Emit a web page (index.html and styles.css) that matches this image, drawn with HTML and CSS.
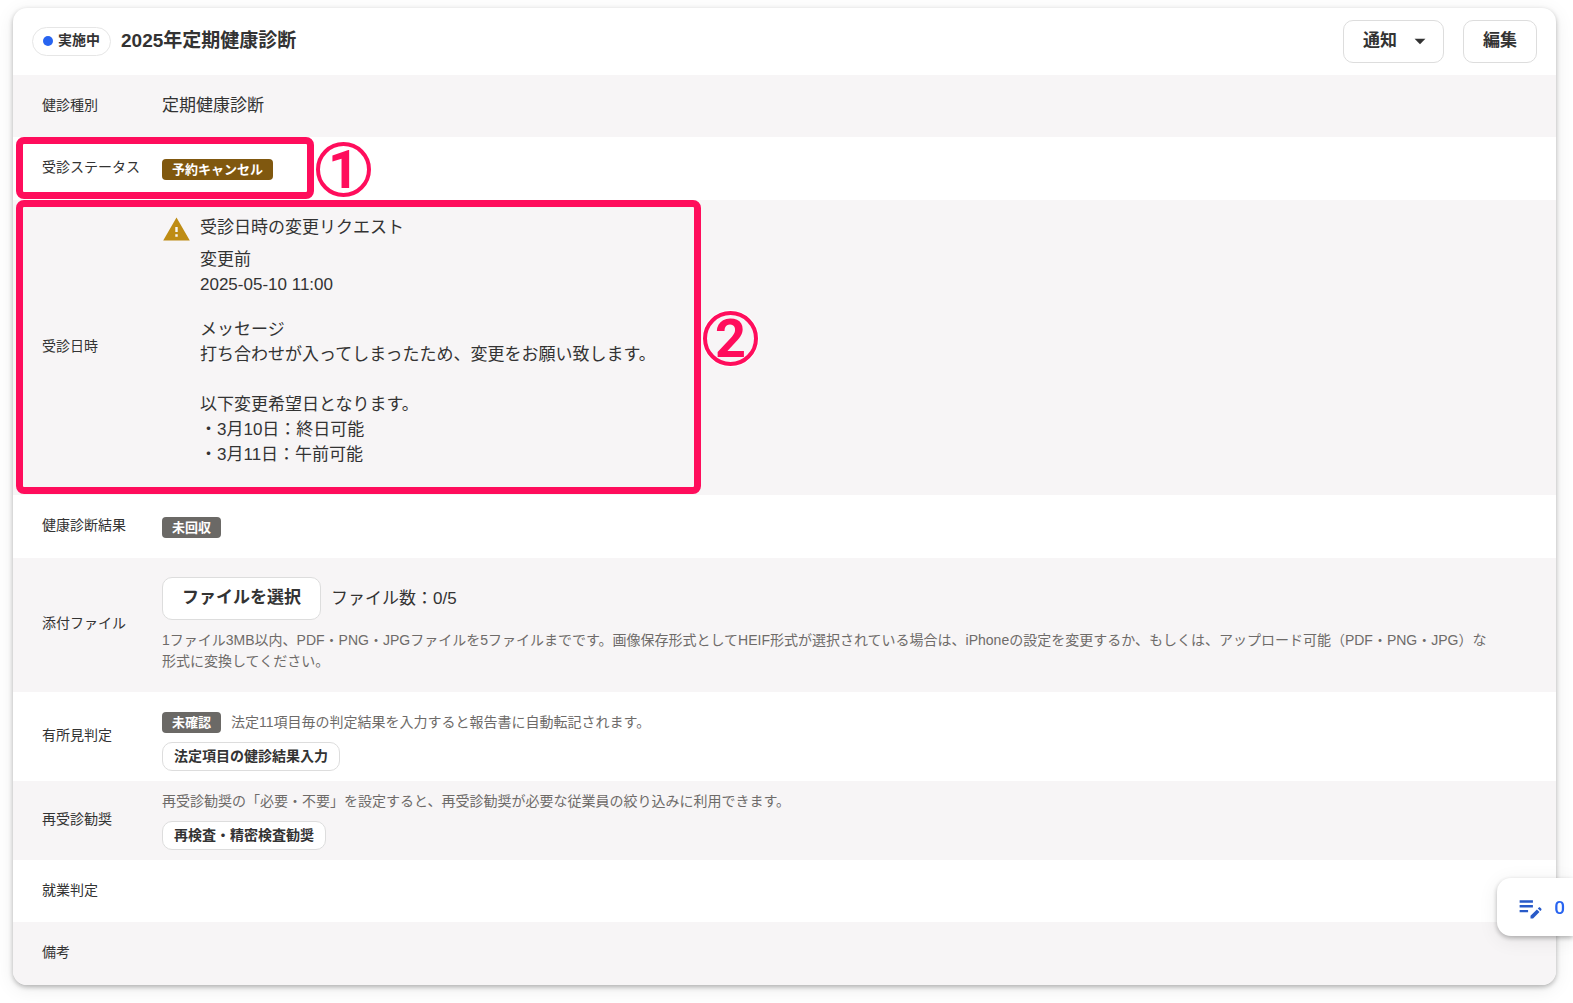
FILE: index.html
```html
<!DOCTYPE html>
<html lang="ja">
<head>
<meta charset="utf-8">
<meta name="viewport" content="width=device-width, initial-scale=1">
<title>2025年定期健康診断</title>
<link rel="stylesheet" href="styles.css">
</head>
<body>
<main class="card">
  <header class="card-header">
    <span class="state"><span class="state-dot"></span>実施中</span>
    <h1 class="title">2025年定期健康診断</h1>
    <div class="actions">
      <button type="button" class="button">通知
        <svg class="caret" viewBox="0 0 24 24" aria-hidden="true"><path d="M7 10l5 5 5-5z"/></svg>
      </button>
      <button type="button" class="button">編集</button>
    </div>
  </header>
  <dl class="details">
    <div class="row">
      <dt>健診種別</dt>
      <dd class="plain">定期健康診断</dd>
    </div>
    <div class="row row-badge">
      <dt>受診ステータス</dt>
      <dd><span class="badge badge-cancel">予約キャンセル</span></dd>
      <div class="marker marker-status"><span class="marker-number">1</span></div>
    </div>
    <div class="row row-request">
      <dt>受診日時</dt>
      <dd class="request">
        <svg class="warning" viewBox="0 0 24 24" aria-hidden="true"><path d="M1 21h22L12 2 1 21zm12-3h-2v-2h2v2zm0-4h-2v-4h2v4z"/></svg>
        <div class="request-body">
          <p class="request-title">受診日時の変更リクエスト</p>
          <p class="request-block">変更前<br>2025-05-10 11:00</p>
          <p class="request-block">メッセージ<br>打ち合わせが入ってしまったため、変更をお願い致します。<br><br>以下変更希望日となります。<br>・3月10日：終日可能<br>・3月11日：午前可能</p>
        </div>
      </dd>
      <div class="marker marker-request"><span class="marker-number">2</span></div>
    </div>
    <div class="row row-badge">
      <dt>健康診断結果</dt>
      <dd><span class="badge">未回収</span></dd>
    </div>
    <div class="row row-files">
      <dt>添付ファイル</dt>
      <dd class="stack">
        <div class="line"><button type="button" class="button">ファイルを選択</button><span>ファイル数：0/5</span></div>
        <p class="help">1ファイル3MB以内、PDF・PNG・JPGファイルを5ファイルまでです。画像保存形式としてHEIF形式が選択されている場合は、iPhoneの設定を変更するか、もしくは、アップロード可能（PDF・PNG・JPG）な<br>形式に変換してください。</p>
      </dd>
    </div>
    <div class="row">
      <dt>有所見判定</dt>
      <dd class="stack stack-findings">
        <div class="line"><span class="badge">未確認</span><span class="help">法定11項目毎の判定結果を入力すると報告書に自動転記されます。</span></div>
        <button type="button" class="button button-small">法定項目の健診結果入力</button>
      </dd>
    </div>
    <div class="row">
      <dt>再受診勧奨</dt>
      <dd class="stack">
        <p class="help">再受診勧奨の「必要・不要」を設定すると、再受診勧奨が必要な従業員の絞り込みに利用できます。</p>
        <button type="button" class="button button-small">再検査・精密検査勧奨</button>
      </dd>
    </div>
    <div class="row">
      <dt>就業判定</dt>
      <dd></dd>
    </div>
    <div class="row">
      <dt>備考</dt>
      <dd></dd>
    </div>
  </dl>
</main>
<button type="button" class="notes" aria-label="メモ 0">
  <svg class="notes-icon" viewBox="0 0 24 24" aria-hidden="true"><path d="M3 10h11v2H3v-2zm0-2h11V6H3v2zm0 8h7v-2H3v2zm15.01-3.13.71-.71c.39-.39 1.02-.39 1.41 0l.71.71c.39.39.39 1.02 0 1.41l-.71.71-2.12-2.12zm-.71.71-5.3 5.3V21h2.12l5.3-5.3-2.12-2.12z"/></svg>
  <span>0</span>
</button>
</body>
</html>
```

FILE: styles.css
```css
* {
  box-sizing: border-box;
}

body {
  margin: 0;
  padding: 8px 17px 18px 13px;
  background: #fff;
  color: #333;
  font-family: "Liberation Sans", "Noto Sans CJK JP", sans-serif;
  font-size: 17px;
  line-height: 25px;
}

p,
dl,
dd {
  margin: 0;
}

.card {
  border-radius: 14px;
  background: #fff;
  box-shadow: 0 2px 5px rgba(0, 0, 0, 0.28), 0 4px 20px rgba(0, 0, 0, 0.08);
}

.card-header {
  display: flex;
  align-items: center;
  gap: 10px;
  min-height: 67px;
  padding: 12px 19px;
}

.state {
  display: flex;
  align-items: center;
  gap: 5px;
  height: 29px;
  padding: 0 10px 2px;
  border: 1px solid #e6e6e6;
  border-radius: 15px;
  font-size: 14px;
  font-weight: bold;
  line-height: 21px;
}

.state-dot {
  width: 10px;
  height: 10px;
  border-radius: 50%;
  background: #2864f0;
}

.title {
  margin: 0;
  padding-bottom: 2px;
  font-size: 19px;
  line-height: 29px;
}

.actions {
  display: flex;
  gap: 19px;
  margin-left: auto;
}

.button {
  display: flex;
  align-items: center;
  height: 43px;
  padding: 0 19px 2px;
  border: 1px solid #ddd;
  border-radius: 10px;
  background: #fff;
  color: #333;
  font: bold 17px/25px "Liberation Sans", "Noto Sans CJK JP", sans-serif;
}

.button-small {
  height: 29px;
  padding: 0 11px;
  font-size: 14px;
  line-height: 21px;
}

.caret {
  width: 26px;
  height: 26px;
  margin: 0 -9px 0 10px;
  fill: #333;
}

.row {
  position: relative;
  display: grid;
  grid-template-columns: 120px 1fr;
  align-items: center;
  min-height: 62px;
  padding: 10px 29px;
}

.row:nth-child(odd) {
  background: #f7f5f6;
}

.row:last-child {
  min-height: 63px;
  border-radius: 0 0 14px 14px;
}

.row dt {
  padding-bottom: 2px;
  font-size: 14px;
  line-height: 21px;
}

.plain {
  padding-bottom: 2px;
}

.row-badge {
  min-height: 63px;
}

.row-files {
  padding-top: 19px;
  padding-bottom: 20px;
}

.badge {
  display: inline-block;
  padding: 0 10px;
  border-radius: 4px;
  background: #6b6966;
  color: #fff;
  font-size: 13px;
  font-weight: bold;
  line-height: 21px;
  vertical-align: middle;
}

.badge-cancel {
  background: #80580f;
}

.request {
  display: flex;
  gap: 9px;
  padding: 5px 0 18px;
}

.warning {
  width: 29px;
  height: 29px;
  fill: #be8c14;
}

.request-title {
  margin-bottom: 7px;
}

.request-block + .request-block {
  margin-top: 20px;
}

.stack {
  display: flex;
  flex-direction: column;
  align-items: flex-start;
  gap: 9px;
}

.row-files .stack {
  gap: 10px;
}

.stack-findings {
  padding-top: 10px;
}

.line {
  display: flex;
  align-items: center;
  gap: 10px;
}

.help {
  color: #6e6b69;
  font-size: 14px;
  line-height: 21px;
}

/* Numbered highlight frames laid over the rows */
.marker {
  position: absolute;
  top: 0;
  left: 3px;
  border: 7px solid #ff0d5c;
  border-radius: 8px;
}

.marker-status {
  width: 298px;
  height: 62px;
}

.marker-request {
  width: 685px;
  height: 294px;
}

.marker-number {
  position: absolute;
  top: 50%;
  left: calc(100% + 9px);
  display: flex;
  align-items: center;
  justify-content: center;
  width: 55px;
  height: 55px;
  margin-top: -26px;
  border: 4px solid #ff0d5c;
  border-radius: 50%;
  background: #fff;
  box-shadow: 0 0 0 1px #fff;
  color: #ff0d5c;
  font: bold 54px/47px Roboto, sans-serif;
}

.marker-request .marker-number {
  margin-top: -36px;
  background: #f7f5f6;
}

.notes {
  position: fixed;
  right: 0;
  bottom: 67px;
  display: flex;
  align-items: center;
  gap: 9px;
  height: 58px;
  padding: 0 8px 0 19px;
  border: 0;
  border-radius: 14px 0 0 14px;
  background: #fff;
  box-shadow: 0 2px 5px rgba(0, 0, 0, 0.28), 0 4px 20px rgba(0, 0, 0, 0.08);
  color: #2864f0;
  font: 500 19px/29px Roboto, sans-serif;
}

.notes-icon {
  width: 29px;
  height: 29px;
  fill: #285ac8;
}
```
